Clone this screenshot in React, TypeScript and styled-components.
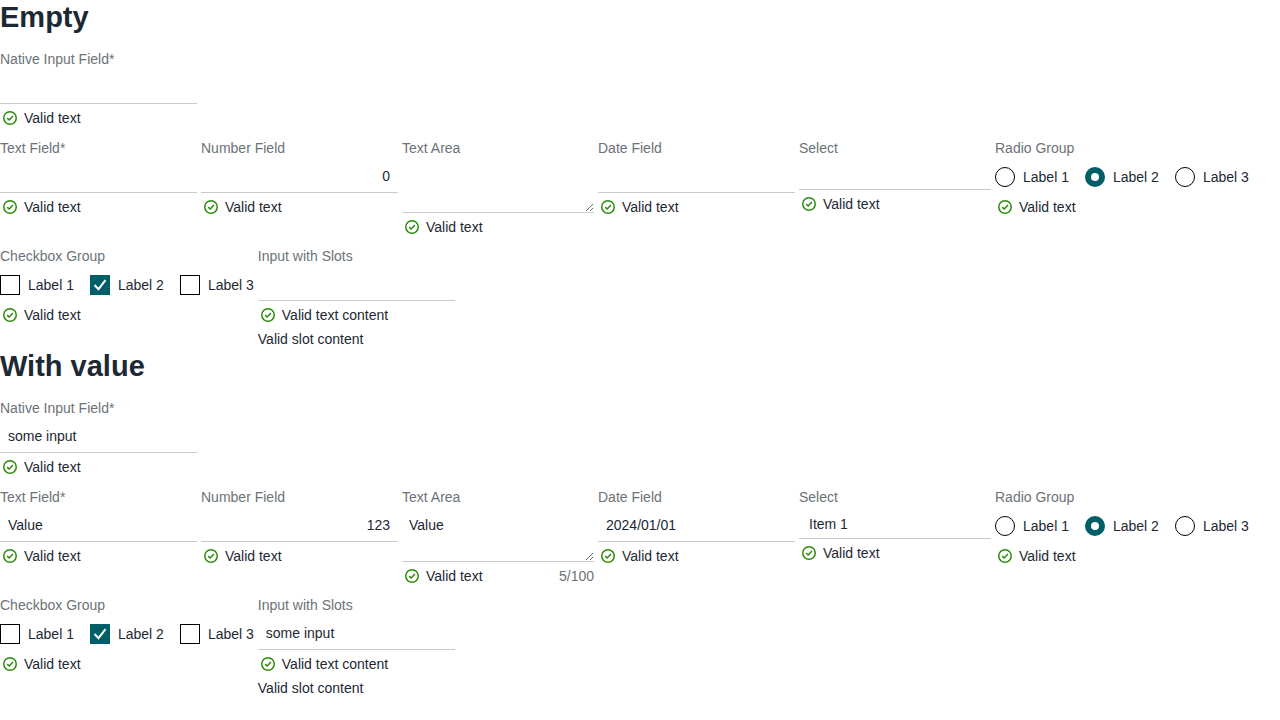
import React, { useId, useState } from 'react';
import styled, { createGlobalStyle, css } from 'styled-components';

const color = {
  text: '#1c2833',
  label: '#6c7277',
  line: '#c8cacc',
  accent: '#005f66',
  success: '#2c8a0b',
};

const GlobalStyle = createGlobalStyle`
  *, *::before, *::after { box-sizing: border-box; }
  body {
    margin: 0;
    background: #fff;
    color: ${color.text};
    font: 14px/20px "Liberation Sans", Arial, sans-serif;
  }
`;

const Title = styled.h1`
  margin: 0 0 15px;
  font-size: 29px;
  line-height: 34px;
  font-weight: 700;
`;

const NativeBlock = styled.div`
  margin-bottom: 10px;
`;

const Fields = styled.div`
  display: flex;
  flex-wrap: wrap;
  align-items: flex-start;
  gap: 9px 4px;
`;

const Field = styled.div<{ $width?: number }>`
  display: flex;
  flex-direction: column;
  width: ${({ $width = 197 }) => $width}px;
`;

const FieldSet = styled.fieldset`
  margin: 0;
  padding: 0;
  border: 0;
  min-width: 0;
`;

const labelStyle = css`
  display: block;
  padding: 0;
  color: ${color.label};
  line-height: 20px;
`;

const Label = styled.label`
  ${labelStyle}
`;

const Legend = styled.legend`
  ${labelStyle}
`;

const controlStyle = css`
  display: block;
  width: 100%;
  margin: 0;
  border: 0;
  border-bottom: 1px solid ${color.line};
  border-radius: 0;
  outline: 0;
  background: transparent;
  color: ${color.text};
  font: inherit;

  &:focus-visible {
    border-bottom-color: ${color.accent};
  }
`;

const Input = styled.input<{ $align?: 'left' | 'right' }>`
  ${controlStyle}
  height: 35px;
  padding: 8px 8px 6px;
  text-align: ${({ $align = 'left' }) => $align};
  appearance: textfield;

  &::-webkit-inner-spin-button {
    display: none;
  }
`;

const TextArea = styled.textarea`
  ${controlStyle}
  height: 55px;
  padding: 8px 7px 6px;
  resize: both;
`;

const Select = styled.select`
  ${controlStyle}
  height: 32px;
  padding: 7px 10px 4px;
  appearance: none;
`;

const Options = styled.div`
  display: flex;
  gap: 16px;
  padding: 9px 0 6px;
`;

const Option = styled.label`
  display: flex;
  align-items: center;
  gap: 8px;
  line-height: 20px;
`;

const choiceStyle = css`
  flex: none;
  width: 20px;
  height: 20px;
  margin: 0;
  border: 1px solid #000;
  background: #fff;
  appearance: none;
`;

const Radio = styled.input`
  ${choiceStyle}
  border-radius: 50%;

  &:checked {
    border: 6px solid ${color.accent};
  }
`;

const CheckboxFrame = styled.span`
  display: grid;

  > * {
    grid-area: 1 / 1;
  }
`;

const Checkbox = styled.input`
  ${choiceStyle}

  &:checked {
    border-color: ${color.accent};
    background: ${color.accent};
  }

  &:not(:checked) + svg {
    visibility: hidden;
  }
`;

const CheckMark = styled.svg`
  width: 20px;
  height: 20px;
  fill: none;
  stroke: #fff;
  stroke-width: 2;
  pointer-events: none;
`;

const Helper = styled.div`
  display: flex;
  align-items: center;
  gap: 4px;
  margin-top: 4px;
`;

const ValidIcon = styled.svg`
  flex: none;
  width: 20px;
  height: 20px;
  fill: none;
  stroke: ${color.success};
  stroke-width: 1.5;
`;

const Counter = styled.span`
  margin-left: auto;
  color: ${color.label};
`;

const SlotContent = styled.div`
  margin-top: 4px;
`;

function Valid({ children = 'Valid text', counter }: { children?: React.ReactNode; counter?: string }) {
  return (
    <Helper>
      <ValidIcon viewBox="0 0 20 20" aria-hidden="true">
        <circle cx="10" cy="10" r="6.25" />
        <path d="M7.2 10.1l2 1.9 3.7-4" />
      </ValidIcon>
      <span>{children}</span>
      {counter && <Counter>{counter}</Counter>}
    </Helper>
  );
}

interface InputFieldProps {
  label: string;
  value?: string;
  type?: string;
  align?: 'left' | 'right';
  children?: React.ReactNode;
}

function InputField({ label, value = '', type = 'text', align, children = <Valid /> }: InputFieldProps) {
  const id = useId();
  return (
    <Field>
      <Label htmlFor={id}>{label}</Label>
      <Input id={id} type={type} defaultValue={value} $align={align} />
      {children}
    </Field>
  );
}

function TextAreaField({ value = '' }: { value?: string }) {
  const id = useId();
  const [text, setText] = useState(value);
  return (
    <Field $width={192}>
      <Label htmlFor={id}>Text Area</Label>
      <TextArea id={id} maxLength={100} value={text} onChange={(e) => setText(e.target.value)} />
      <Valid counter={text ? `${text.length}/100` : undefined} />
    </Field>
  );
}

function SelectField({ value = '' }: { value?: string }) {
  const id = useId();
  return (
    <Field $width={192}>
      <Label htmlFor={id}>Select</Label>
      <Select id={id} defaultValue={value}>
        <option value="" />
        <option>Item 1</option>
      </Select>
      <Valid />
    </Field>
  );
}

const choices = ['Label 1', 'Label 2', 'Label 3'];

function RadioGroup() {
  const name = useId();
  return (
    <FieldSet>
      <Legend>Radio Group</Legend>
      <Options>
        {choices.map((choice) => (
          <Option key={choice}>
            <Radio type="radio" name={name} defaultChecked={choice === 'Label 2'} />
            {choice}
          </Option>
        ))}
      </Options>
      <Valid />
    </FieldSet>
  );
}

function CheckboxGroup() {
  return (
    <FieldSet>
      <Legend>Checkbox Group</Legend>
      <Options>
        {choices.map((choice) => (
          <Option key={choice}>
            <CheckboxFrame>
              <Checkbox type="checkbox" defaultChecked={choice === 'Label 2'} />
              <CheckMark viewBox="0 0 20 20" aria-hidden="true">
                <path d="M4.5 10l4 4.2 7-9" />
              </CheckMark>
            </CheckboxFrame>
            {choice}
          </Option>
        ))}
      </Options>
      <Valid />
    </FieldSet>
  );
}

interface Values {
  input?: string;
  text?: string;
  number: string;
  date?: string;
  item?: string;
}

function FormSection({ title, values }: { title: string; values: Values }) {
  return (
    <section>
      <Title>{title}</Title>
      <NativeBlock>
        <InputField label="Native Input Field*" value={values.input} />
      </NativeBlock>
      <Fields>
        <InputField label="Text Field*" value={values.text} />
        <InputField label="Number Field" type="number" align="right" value={values.number} />
        <TextAreaField value={values.text} />
        <InputField label="Date Field" value={values.date} />
        <SelectField value={values.item} />
        <RadioGroup />
        <CheckboxGroup />
        <InputField label="Input with Slots" value={values.input}>
          <Valid>Valid text content</Valid>
          <SlotContent>Valid slot content</SlotContent>
        </InputField>
      </Fields>
    </section>
  );
}

export default function App() {
  return (
    <>
      <GlobalStyle />
      <main>
        <FormSection title="Empty" values={{ number: '0' }} />
        <FormSection
          title="With value"
          values={{ input: 'some input', text: 'Value', number: '123', date: '2024/01/01', item: 'Item 1' }}
        />
      </main>
    </>
  );
}
